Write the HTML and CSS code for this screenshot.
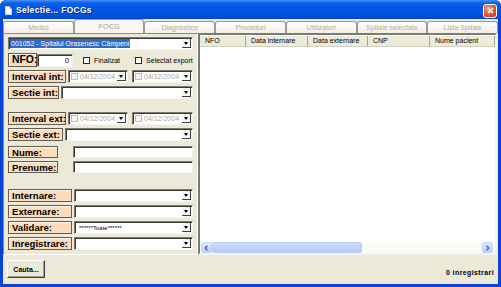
FILE: index.html
```html
<!DOCTYPE html>
<html lang="ro">
  <head>
    <meta charset="UTF-8" />
    <title>Selectie... FOCGs</title>
    <link rel="stylesheet" href="styles.css">
  </head>

  <body>
    <section class="window">
      <div class="titlebar">
        <span class="app_icon"></span>
        <span class="title">Selectie... FOCGs</span>
        <span class="close">
          <svg width="7" height="7" viewBox="0 0 7 7"><path d="M1 1L6 6M6 1L1 6" stroke="#fff" stroke-width="1.6" /></svg>
        </span>
      </div>

      <div class="client">
        <div class="tabs">
          <span class="tab">Medici</span>
          <span class="tab active">FOCG</span>
          <span class="tab">Diagnostice</span>
          <span class="tab">Proceduri</span>
          <span class="tab">Utilizatori</span>
          <span class="tab">Spitale selectate</span>
          <span class="tab">Lista Spitale</span>
        </div>

        <div class="page">
          <div class="filters">
            <div class="row">
              <div class="combo wide">
                <span class="selected">001052 - Spitalul Orasenesc Câmpeni</span>
                <span class="drop"></span>
              </div>
            </div>

            <div class="row nfo">
              <span class="label w-nfo">NFO:</span>
              <span class="input num">0</span>
              <span class="check first"></span><span class="check_text">Finalizat</span>
              <span class="check second"></span><span class="check_text">Selectat export</span>
            </div>

            <div class="row">
              <span class="label w-int">Interval int:</span>
              <div class="datebox first"><span class="check off"></span><span class="date">04/12/2004</span><span class="drop"></span></div>
              <div class="datebox"><span class="check off"></span><span class="date">04/12/2004</span><span class="drop"></span></div>
            </div>

            <div class="row">
              <span class="label w-sint">Sectie int:</span>
              <div class="combo grow"><span class="drop"></span></div>
            </div>

            <div class="row spaced">
              <span class="label w-int">Interval ext:</span>
              <div class="datebox first"><span class="check off"></span><span class="date">04/12/2004</span><span class="drop"></span></div>
              <div class="datebox"><span class="check off"></span><span class="date">04/12/2004</span><span class="drop"></span></div>
            </div>

            <div class="row">
              <span class="label w-sext">Sectie ext:</span>
              <div class="combo grow"><span class="drop"></span></div>
            </div>

            <div class="row small name">
              <span class="label w-name">Nume:</span>
              <span class="input text"></span>
            </div>

            <div class="row small">
              <span class="label w-name">Prenume:</span>
              <span class="input text"></span>
            </div>

            <div class="row spaced_lg">
              <span class="label w-state">Internare:</span>
              <div class="combo grow"><span class="drop"></span></div>
            </div>

            <div class="row">
              <span class="label w-state">Externare:</span>
              <div class="combo grow"><span class="drop"></span></div>
            </div>

            <div class="row">
              <span class="label w-state">Validare:</span>
              <div class="combo grow"><span class="value">******Toate******</span><span class="drop"></span></div>
            </div>

            <div class="row">
              <span class="label w-state">Inregistrare:</span>
              <div class="combo grow"><span class="drop"></span></div>
            </div>
          </div>

          <div class="grid">
            <div class="grid_head">
              <span class="col c-nfo">NFO</span>
              <span class="col c-din">Data internare</span>
              <span class="col c-dex">Data externare</span>
              <span class="col c-cnp">CNP</span>
              <span class="col c-name">Nume pacient</span>
            </div>
            <div class="grid_body"></div>
            <div class="hscroll">
              <span class="arrow">
                <svg width="5" height="6" viewBox="0 0 5 6"><path d="M3.5 0.8L1.2 3L3.5 5.2" fill="none" stroke="#4d6185" stroke-width="1.3" /></svg>
              </span>
              <span class="thumb"></span>
              <span class="track"></span>
              <span class="arrow">
                <svg width="5" height="6" viewBox="0 0 5 6"><path d="M1.5 0.8L3.8 3L1.5 5.2" fill="none" stroke="#4d6185" stroke-width="1.3" /></svg>
              </span>
            </div>
          </div>
        </div>

        <div class="footer">
          <button class="search">Cauta...</button>
          <span class="count">0 inregistrari</span>
        </div>
      </div>
    </section>
  </body>
</html>
```

FILE: styles.css
```css
* {
  padding: 0;
  margin: 0;
  box-sizing: border-box;
}

body {
  width: 501px;
  height: 287px;
  overflow: hidden;
  background: #fff;
  font-family: "Liberation Sans", Arial, sans-serif;
  font-size: 7px;
  color: #000;
}

.window {
  display: flex;
  flex-direction: column;
  width: 501px;
  height: 287px;
  background: #0845d4;
  border-radius: 6px 6px 0 0;
}

/* title bar */
.titlebar {
  display: flex;
  align-items: center;
  height: 19px;
  padding: 0 4px 0 5px;
  border-radius: 6px 6px 0 0;
  background: linear-gradient(#4a94f8 0, #0d60ea 3px, #0257e6 8px, #0053e0 14px, #0049cf 19px);
  color: #fff;
}

.app_icon {
  position: relative;
  width: 7px;
  height: 9px;
  margin-top: 1px;
  background: #fff;
  border: 1px solid #c9d8f5;
}

.app_icon::after {
  content: "";
  position: absolute;
  top: -1px;
  right: -1px;
  border-top: 3px solid #1a62e6;
  border-left: 3px solid #b9c9ea;
}

.title {
  margin-left: 4px;
  font-size: 8.4px;
  font-weight: 700;
  letter-spacing: 0.35px;
  text-shadow: 1px 1px 0 #0a2a8a;
}

.close {
  display: flex;
  align-items: center;
  justify-content: center;
  width: 14px;
  height: 14px;
  margin-left: auto;
  margin-top: 2px;
  border: 1px solid #fff;
  border-radius: 3px;
  background: radial-gradient(circle at 35% 30%, #f2a48a, #e0532e 55%, #c43d1c);
}

/* client area */
.client {
  display: flex;
  flex-direction: column;
  flex: 1;
  margin: 0 3px 3px;
  background: #ece9d8;
}

.tabs {
  display: flex;
  height: 14px;
}

.tab {
  width: 71px;
  height: 12px;
  margin-top: 2px;
  border: 1px solid #919b9c;
  border-bottom: none;
  border-radius: 3px 3px 0 0;
  background: linear-gradient(#fefefe, #f1efe6);
  color: #b1ae9f;
  text-align: center;
  line-height: 11px;
}

.tab.active {
  height: 14px;
  margin-top: 0;
  background: #f7f6f1;
  color: #a9a697;
  font-size: 7.4px;
  line-height: 14px;
}

.page {
  display: flex;
  height: 222px;
}

/* left filter panel */
.filters {
  width: 195px;
  padding: 3px 4px 0;
  border: 1px solid;
  border-color: #8b8a80 #fff #fff #8b8a80;
}

.row {
  display: flex;
  align-items: stretch;
  height: 13px;
}

.row + .row {
  margin-top: 3px;
}

.row.nfo {
  height: 14px;
  align-items: center;
}

.row.small {
  height: 12px;
}

.row.spaced {
  margin-top: 13px;
}

.row.name {
  margin-top: 5px;
}

.row.spaced_lg {
  margin-top: 16px;
}

.label {
  align-self: stretch;
  padding-left: 3px;
  border: 1px solid #5f5e55;
  box-shadow: inset 1px 1px 0 #fff6ea;
  background: #fcdcbd;
  font-size: 9.6px;
  font-weight: 700;
  line-height: 11px;
  white-space: nowrap;
}

.row.nfo .label {
  font-size: 10.4px;
  line-height: 12px;
}

.w-nfo { width: 29px; }
.w-int { width: 58px; }
.w-sint { width: 51px; }
.w-sext { width: 55px; }
.w-name { width: 50px; }
.w-state { width: 64px; }

.combo,
.input,
.datebox {
  display: flex;
  align-items: center;
  border: 1px solid;
  border-color: #7b7a72 #f4f3ee #f4f3ee #7b7a72;
  box-shadow: inset 1px 1px 0 #3a3a36;
  background: #fff;
}

.combo {
  padding: 1px;
}

.combo.wide {
  width: 185px;
}

.combo.grow {
  flex: 1;
  margin-left: 2px;
}

.selected {
  padding: 0 1px;
  background: #316ac5;
  color: #fff;
  line-height: 9px;
  white-space: nowrap;
}

.value {
  padding-left: 3px;
  font-size: 6px;
}

.drop {
  position: relative;
  flex: none;
  width: 9px;
  height: 9px;
  margin-left: auto;
  border-right: 1px solid #404040;
  border-bottom: 1px solid #404040;
  background: #f6f5f0;
}

.drop::after {
  content: "";
  position: absolute;
  left: 2px;
  top: 3px;
  border-left: 2px solid transparent;
  border-right: 2px solid transparent;
  border-top: 3px solid #000;
}

.input.num {
  justify-content: flex-end;
  width: 36px;
  height: 13px;
  padding-right: 3px;
  font-size: 7.6px;
}

.input.text {
  flex: 1;
  margin-left: 15px;
}

.check {
  flex: none;
  width: 7px;
  height: 7px;
  border: 1px solid #2b2b2b;
  background: #fff;
}

.check.first {
  margin-left: 10px;
}

.check.second {
  margin-left: 15px;
}

.check.off {
  margin-left: 2px;
  border-color: #c2c0b5;
  background: #f4f3ee;
}

.check_text {
  margin-left: 4px;
  white-space: nowrap;
}

.datebox {
  width: 60px;
  margin-left: 2px;
  padding-right: 1px;
}

.datebox + .datebox {
  flex: 1;
  margin-left: 4px;
}

.date {
  margin-left: 2px;
  color: #aca899;
  white-space: nowrap;
}

/* result grid */
.grid {
  display: flex;
  flex-direction: column;
  flex: 1;
  margin-right: 1px;
  border: 2px solid;
  border-color: #7b7a72 #f4f3ee #f4f3ee #7b7a72;
  background: #fff;
}

.grid_head {
  display: flex;
  height: 11px;
  margin-top: 1px;
  background: #ebeadb;
  border-bottom: 1px solid #d4d0c0;
}

.col {
  padding-left: 5px;
  border-right: 1px solid #a7a597;
  line-height: 10px;
  white-space: nowrap;
}

.c-nfo { width: 46px; }
.c-din { width: 62px; }
.c-dex { width: 60px; }
.c-cnp { width: 62px; }
.c-name { width: 65px; }

.grid_body {
  flex: 1;
}

.hscroll {
  display: flex;
  height: 11px;
  padding: 0 2px 0 1px;
  background: #fbfbf8;
}

.arrow {
  display: flex;
  align-items: center;
  justify-content: center;
  width: 11px;
  border: 1px solid #c3d3fd;
  border-radius: 2px;
  background: linear-gradient(#e2ebfe, #bccffb);
}

.thumb {
  width: 150px;
  border: 1px solid #b8cdf8;
  border-radius: 2px;
  background: linear-gradient(#cddbfc, #b5c9f7);
}

.track {
  flex: 1;
}

/* footer */
.footer {
  display: flex;
  align-items: flex-start;
  flex: 1;
  padding: 5px 4px 0;
}

.search {
  width: 38px;
  height: 18px;
  border: 1px solid;
  border-color: #fff #404040 #404040 #fff;
  box-shadow: inset -1px -1px 0 #a19f92;
  background: #ece9d8;
  font-family: "Liberation Sans", Arial, sans-serif;
  font-size: 7px;
  font-weight: 700;
  color: #000;
}

.count {
  margin-left: auto;
  margin-top: 9px;
  font-weight: 700;
  letter-spacing: 0.4px;
}
```
